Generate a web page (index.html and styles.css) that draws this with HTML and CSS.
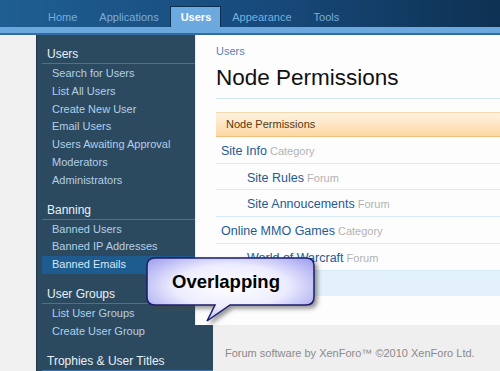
FILE: index.html
```html
<!DOCTYPE html>
<html lang="en">
<head>
  <meta charset="UTF-8" />
  <meta name="viewport" content="width=device-width, initial-scale=1.0" />
  <title>Node Permissions</title>
  <link rel="stylesheet" href="styles.css">
</head>
<body>

  <div class="header">
    <ul class="tabs">
      <li><a href="#">Home</a></li>
      <li><a href="#">Applications</a></li>
      <li class="active"><a href="#">Users</a></li>
      <li><a href="#">Appearance</a></li>
      <li><a href="#">Tools</a></li>
    </ul>
  </div>
  <div class="subbar"></div>

  <div class="page">
    <div class="gutter"></div>

    <div class="sidebar">
      <div class="section">
        <h3>Users</h3>
        <ul>
          <li><a href="#">Search for Users</a></li>
          <li><a href="#">List All Users</a></li>
          <li><a href="#">Create New User</a></li>
          <li><a href="#">Email Users</a></li>
          <li><a href="#">Users Awaiting Approval</a></li>
          <li><a href="#">Moderators</a></li>
          <li><a href="#">Administrators</a></li>
        </ul>
      </div>
      <div class="section">
        <h3>Banning</h3>
        <ul>
          <li><a href="#">Banned Users</a></li>
          <li><a href="#">Banned IP Addresses</a></li>
          <li class="active"><a href="#">Banned Emails</a></li>
        </ul>
      </div>
      <div class="section">
        <h3>User Groups</h3>
        <ul>
          <li><a href="#">List User Groups</a></li>
          <li><a href="#">Create User Group</a></li>
        </ul>
      </div>
      <div class="section">
        <h3>Trophies &amp; User Titles</h3>
      </div>
    </div>

    <div class="main">
      <div class="content">
        <div class="crumb"><a href="#">Users</a></div>
        <h1>Node Permissions</h1>

        <div class="node-list">
          <div class="list-head">Node Permissions</div>
          <div class="row"><a href="#">Site Info</a> <span class="type">Category</span></div>
          <div class="row child"><a href="#">Site Rules</a> <span class="type">Forum</span></div>
          <div class="row child"><a href="#">Site Annoucements</a> <span class="type">Forum</span></div>
          <div class="row"><a href="#">Online MMO Games</a> <span class="type">Category</span></div>
          <div class="row child"><a href="#">World of Warcraft</a> <span class="type">Forum</span></div>
          <div class="submit-bar"></div>
        </div>
      </div>

      <div class="footer">Forum software by XenForo&trade; &copy;2010 XenForo Ltd.</div>
    </div>
  </div>

  <!-- annotation bubble drawn over the page -->
  <div class="callout">
    <svg width="190" height="80" viewBox="0 0 190 80">
      <defs>
        <radialGradient id="bubbleFill" cx="50%" cy="45%" r="62%">
          <stop offset="0" stop-color="#ffffff" />
          <stop offset="0.55" stop-color="#ececff" />
          <stop offset="1" stop-color="#a6a6f0" />
        </radialGradient>
        <filter id="bubbleShadow" x="-10%" y="-10%" width="130%" height="140%">
          <feDropShadow dx="3" dy="3" stdDeviation="2" flood-color="#444" flood-opacity="0.55" />
        </filter>
      </defs>
      <path d="M15,8 H166 Q174,8 174,16 V47 Q174,55 166,55 H90 L67,71 L75,55 H15 Q7,55 7,47 V16 Q7,8 15,8 Z"
            fill="url(#bubbleFill)" stroke="#1c1c6a" stroke-width="1.5" filter="url(#bubbleShadow)" />
      <text x="86" y="38" text-anchor="middle" class="callout-text">Overlapping</text>
    </svg>
  </div>

</body>
</html>
```

FILE: styles.css
```css
* {
  box-sizing: border-box;
}

html, body {
  height: 100%;
  overflow: hidden;
}

body {
  margin: 0;
  font-family: "Liberation Sans", Arial, sans-serif;
  font-size: 11px;
  background: #f0f0f0;
}

a {
  text-decoration: none;
}

ul {
  list-style: none;
  margin: 0;
  padding: 0;
}

/* Top tabs */
.header {
  height: 27px;
  background: linear-gradient(to right, #1f5e92 0%, #17497a 55%, #0d3152 100%);
}

.tabs {
  display: flex;
  padding: 6px 0 0 37px;
  height: 27px;
}

.tabs li {
  height: 21px;
}

.tabs a {
  display: block;
  padding: 0 11px;
  line-height: 22px;
  color: #78aedd;
}

.tabs li.active {
  background: #6ba9de;
  border: 1px solid #0c3052;
  border-bottom: none;
}

.tabs li.active a {
  padding: 0 9px 0 10px;
  line-height: 20px;
  color: #fff;
  font-weight: bold;
}

.subbar {
  height: 8px;
  background: #6aa8de;
  border-bottom: 2px solid #356c9f;
}

/* Page body */
.page {
  display: flex;
  min-height: 336px;
}

.gutter {
  width: 36px;
  flex-shrink: 0;
  background: #f0f0f0;
}

.sidebar {
  width: 177px;
  flex-shrink: 0;
  padding-top: 11px;
  background: #2c4a5f;
  border-left: 1px solid #1f3748;
}

.section + .section {
  margin-top: 12px;
}

.sidebar h3 {
  margin: 0 0 0 5px;
  padding: 0 0 1px 5px;
  font-size: 12px;
  font-weight: normal;
  line-height: 16px;
  color: #e9f1f8;
  border-bottom: 1px solid #3a76a8;
}

.sidebar ul {
  margin-top: 1px;
}

.sidebar li {
  margin-left: 5px;
}

.sidebar li a {
  display: block;
  padding-left: 10px;
  line-height: 17.8px;
  color: #b3cfe8;
}

.sidebar li.active {
  background: #1e5c8f;
}

.sidebar li.active a {
  color: #d6e7f6;
}

/* Content */
.main {
  position: relative;
  flex: 1;
  margin-left: -18px;
}

.content {
  height: 290px;
  padding: 9px 0 0 20px;
  background: #fdfdfe;
  border-left: 1px solid #e2eaf2;
}

.crumb {
  line-height: 14px;
}

.crumb a {
  color: #5b80b2;
}

h1 {
  margin: 6px 0 0;
  padding-bottom: 6px;
  font-size: 22.5px;
  font-weight: normal;
  line-height: 28px;
  color: #111;
  border-bottom: 1px solid #d3e7f6;
}

.node-list {
  margin-top: 13px;
}

.list-head {
  height: 25px;
  padding-left: 10px;
  line-height: 23px;
  color: #553812;
  background: linear-gradient(#fff3e2, #fcd7a4);
  border-top: 1px solid #f6d6ab;
  border-bottom: 1px solid #f2bd78;
}

.row {
  padding: 3px 0 0 5px;
  line-height: 22.7px;
  border-bottom: 1px solid #d6eaf8;
}

.row.child {
  padding-left: 31px;
}

.row a {
  font-size: 12.5px;
  color: #1f5a94;
}

.type {
  color: #b3b3b3;
}

.submit-bar {
  height: 25px;
  background: #e3f1fb;
}

.footer {
  height: 60px;
  margin-left: 18px;
  padding: 21px 0 0 12px;
  line-height: 14px;
  color: #8a8a8a;
  background: #efefef;
}

/* Annotation bubble */
.callout {
  position: absolute;
  left: 140px;
  top: 250px;
  width: 190px;
  height: 80px;
}

.callout svg {
  display: block;
}

.callout-text {
  font-family: "Liberation Sans", Arial, sans-serif;
  font-size: 18.5px;
  font-weight: bold;
  fill: #000;
}
```
